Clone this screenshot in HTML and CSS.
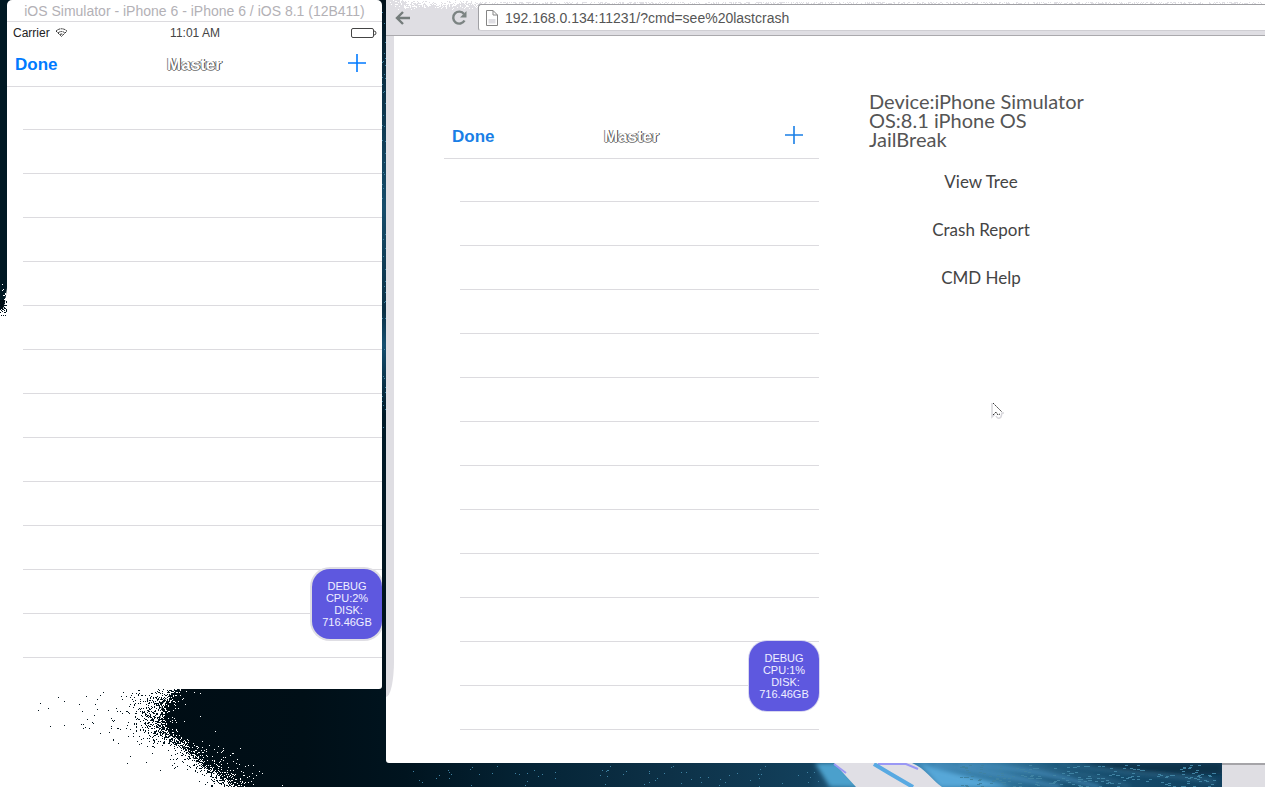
FILE: index.html
```html
<!DOCTYPE html>
<html lang="en">
<head>
<meta charset="utf-8">
<title>iOS Simulator remote debug</title>
<link rel="stylesheet" href="styles.css">
</head>
<body>
<svg class="wallpaper" viewBox="0 0 1265 787" preserveAspectRatio="xMinYMin slice" aria-hidden="true">
  <defs>
    <linearGradient id="floor" x1="0" x2="1">
      <stop offset="0" stop-color="#000b12"/><stop offset=".24" stop-color="#000f17"/><stop offset=".32" stop-color="#00141f"/>
      <stop offset=".42" stop-color="#052436"/><stop offset=".53" stop-color="#0d3147"/><stop offset=".64" stop-color="#12405c"/>
      <stop offset=".7" stop-color="#418abb"/><stop offset=".79" stop-color="#3278a0"/><stop offset=".85" stop-color="#164f70"/><stop offset=".97" stop-color="#11405e"/>
    </linearGradient>
    <linearGradient id="seam" x1="0" y1="0" x2="0" y2="1">
      <stop offset="0" stop-color="#001019"/><stop offset=".12" stop-color="#0c3045"/><stop offset=".3" stop-color="#174d6b"/>
      <stop offset=".45" stop-color="#0c3045"/><stop offset=".5" stop-color="#164f70"/><stop offset=".6" stop-color="#001a28"/><stop offset="1" stop-color="#001019"/>
    </linearGradient>
    <filter id="soft"><feGaussianBlur stdDeviation="2"/></filter>
  </defs>
  <rect width="1265" height="787" fill="url(#floor)"/>
  <rect x="380" width="8" height="690" fill="url(#seam)"/>
  <rect width="10" height="300" fill="#001823"/>
  <path d="M0 309H3L5 302 7 288H10V689H180L168 697 162 704 160 722 164 733 178 740 188 752 198 764 214 773 230 787H0Z" fill="#fff"/>
  <g filter="url(#soft)">
    <path d="M815 763H838L860 787H830Z" fill="#4ba0cc"/>
    <path d="M920 763C945 773 975 777 1010 787H940Z" fill="#57a7d8"/>
    <path d="M935 765C990 771 1020 779 1060 787M960 764C1040 770 1060 777 1100 787" fill="none" stroke="#4a8fbe" stroke-width="3"/>
    <path d="M1010 764C1050 771 1090 772 1130 787M1060 764C1120 774 1160 772 1215 782" fill="none" stroke="#356e91" stroke-width="2"/>
    <path d="M1080 763H1222V774C1180 775 1130 774 1080 763Z" fill="#0c3048"/>
  </g>
  <path d="M834 763H912C926 769 932 780 942 787H856Z" fill="#e0dfe5"/>
  <path d="M834 764L846 773M878 764H906L918 769" fill="none" stroke="#9a98f5" stroke-width="2"/>
  <path d="M874 764L889 773 913 787" fill="none" stroke="#58a9e2" stroke-width="4"/>
  <path d="M1222 763H1265V787H1222Z" fill="#dfdee3"/>
  <path d="M1222 764H1265" stroke="#a5a4a8" stroke-width="2"/>
  <path id="dark-specks" fill="#00111a"/>
  <path id="white-specks" fill="#fff"/>
  <path id="stars" fill="#3f82a2"/>
</svg>

<main class="desktop">
  <section class="simulator" aria-label="iOS Simulator">
    <h1 class="sim-title">iOS Simulator - iPhone 6 - iPhone 6 / iOS 8.1 (12B411)</h1>
    <div class="status">
      <span class="carrier">Carrier
        <svg width="13" height="9" viewBox="0 0 13 9" fill="none" stroke="#333"><path stroke-dasharray="2 .6" d="M1 3Q6.500-1.500 12 3L6.500 8.500ZM3 5Q6.500 2 10 5M5 6.500Q6.500 5.500 8 6.500"/></svg>
      </span>
      <time class="clock">11:01 AM</time>
      <svg class="battery" width="26" height="10" viewBox="0 0 26 10" fill="none" stroke="#444"><rect x=".5" y=".5" width="22" height="9" rx="1.500"/><path d="M23 3Q25 3 25 5T23 7" /></svg>
    </div>
    <div class="nav">
      <button class="done">Done</button>
      <h2 class="nav-title">Master</h2>
      <button class="add" aria-label="Add"><svg width="18" height="18" viewBox="0 0 18 18"><path d="M9 0V18M0 9H18" stroke="#007aff" stroke-width="1.600"/></svg></button>
    </div>
    <ul class="rows"><li></li><li></li><li></li><li></li><li></li><li></li><li></li><li></li><li></li><li></li><li></li><li></li><li></li></ul>
    <div class="debug">DEBUG<br>CPU:2%<br>&nbsp;DISK:<br>716.46GB</div>
  </section>

  <section class="browser" aria-label="Browser">
    <header class="toolbar">
      <svg class="noise" width="879" height="12" aria-hidden="true"><path id="toolbar-specks" fill="#fff"/></svg>
      <button class="tool" aria-label="Back"><svg width="16" height="14" viewBox="0 0 16 14" fill="none" stroke="#747c7b" stroke-width="2.400"><path d="M15 7H2M8 1L2 7 8 13"/></svg></button>
      <button class="tool" aria-label="Reload"><svg width="16" height="16" viewBox="0 0 16 16"><path d="M13 4A6 6 0 1 0 13.500 10.500" fill="none" stroke="#7b8382" stroke-width="2.400"/><path d="M15.500 1V7.500H9Z" fill="#7b8382"/></svg></button>
      <label class="omnibox">
        <svg width="12" height="16" viewBox="0 0 12 16" fill="#fff" stroke="#858585"><path d="M.5.5H7L11.500 5V15.500H.5ZM7 .5V5H11.500"/><path d="M2.500 9H9.500V13.500H2.500Z" fill="#dfdee3" stroke="none"/></svg>
        <input class="url" aria-label="Address" value="192.168.0.134:11231/?cmd=see%20lastcrash">
      </label>
    </header>
    <div class="page">
      <div class="edge"></div>
      <div class="capture">
        <div class="nav">
          <button class="done">Done</button>
          <h2 class="nav-title">Master</h2>
          <button class="add" aria-label="Add"><svg width="18" height="18" viewBox="0 0 18 18"><path d="M9 0V18M0 9H18" stroke="#1a7fe6" stroke-width="1.600"/></svg></button>
        </div>
        <ul class="rows"><li></li><li></li><li></li><li></li><li></li><li></li><li></li><li></li><li></li><li></li><li></li><li></li><li></li></ul>
        <div class="debug">DEBUG<br>CPU:1%<br>&nbsp;DISK:<br>716.46GB</div>
      </div>
      <aside class="info">
        <p class="device">Device:iPhone Simulator<br>OS:8.1 iPhone OS<br>JailBreak</p>
        <nav class="links"><a href="#tree">View Tree</a><a href="#crash">Crash Report</a><a href="#help">CMD Help</a></nav>
      </aside>
    </div>
  </section>
</main>
<svg class="cursor" width="14" height="18" viewBox="0 0 14 18" fill="none" aria-hidden="true"><path d="M1 1V15L4 12M5 14Q7 18 10 15L11 11H13" stroke="#d8d7dc" stroke-width="1.500"/><path d="M2 1L11 10M2 13L5 10 7 13 9 12" stroke="#333" stroke-dasharray="2 1"/></svg>
<script src="specks.js"></script>
</body>
</html>
```
FILE: styles.css
```css
* { box-sizing: border-box; }
body { margin: 0; min-height: 100vh; overflow: hidden; font-family: "Liberation Sans", Arial, sans-serif; color: #222; background: #00121b; }
button { border: 0; padding: 0; background: none; font: inherit; }
h1, h2, p, ul { margin: 0; padding: 0; }
.wallpaper { position: absolute; inset: 0; width: 100%; height: 100%; }
.desktop { position: relative; display: grid; grid-template-columns: 375px 1fr; gap: 4px; align-items: start; padding-left: 7px; }

.simulator { position: relative; overflow: hidden; background: #fff; border-radius: 5px 5px 3px 3px; padding-bottom: 31px; }
.sim-title { height: 22px; border-bottom: 1px solid #dcdbdf; font-size: 14px; line-height: 23px; font-weight: 400; text-align: center; color: #b3b1b6; white-space: nowrap; }
.status { display: grid; grid-template-columns: 1fr auto 1fr; align-items: center; height: 21px; padding: 0 5px 0 6px; font-size: 12px; }
.carrier { display: flex; align-items: center; gap: 5px; }
.clock { color: #444; }
.battery { justify-self: end; }
.nav { display: grid; grid-template-columns: 1fr auto 1fr; align-items: center; height: 44px; padding: 0 8px; border-bottom: 1px solid #dcdbdf; }
.done { justify-self: start; font-size: 17px; line-height: 20px; font-weight: 700; color: #007aff; }
.nav-title { font-size: 17px; line-height: 20px; font-weight: 700; color: #fff; text-shadow: 1px 0 #444, -1px 0 #888, 0 1px #888; }
.add { justify-self: end; display: flex; margin-right: 8px; padding-bottom: 3px; }
.rows { list-style: none; padding-left: 16px; }
.rows li { height: 44px; border-bottom: 1px solid #dcdbdf; }
.rows li:first-child { height: 43px; }
.debug { position: absolute; right: 0; bottom: 50px; width: 70px; height: 70px; padding-top: 11px; border-radius: 18px; background: #5e58df; box-shadow: 0 0 0 2px #dfdee4; color: #f0efff; font-size: 11px; line-height: 12px; text-align: center; }

.browser { background: #fff; border-radius: 0 0 0 3px; }
.toolbar { position: relative; display: flex; align-items: center; height: 36px; padding: 4px 0 4px 9px; background: #dfdee3; border-bottom: 1px solid #aaa9ad; }
.noise { position: absolute; top: 0; left: 0; width: 100%; }
.tool { position: relative; display: flex; width: 56px; }
.tool + .tool { width: 27px; }
.omnibox { position: relative; flex: 1; display: flex; align-items: center; gap: 7px; height: 27px; padding-left: 7px; background: #fff; border: 1px solid #a0a0a4; border-right: 0; border-bottom-color: #cfced3; border-radius: 3px 0 0 3px; }
.url { flex: 1; min-width: 0; border: 0; padding: 0; background: none; font: 14px "Liberation Sans", Arial, sans-serif; color: #555; outline: 0; }
.page { display: grid; grid-template-columns: 8px 375px 1fr; }
.edge { height: 661px; background: #dfdee3; border-bottom-right-radius: 8px 36px; }
.capture { position: relative; margin-left: 50px; margin-right: -50px; padding: 79px 0 33px; }
.capture .debug { bottom: 52px; box-shadow: 0 0 0 1px #d8d7ef; }
.capture .done { color: #1a7fe6; }
.info { display: flex; flex-direction: column; align-items: flex-start; padding: 56px 0 0 100px; font-family: Lato, sans-serif; color: #555; }
.device { font-size: 20px; line-height: 19px; white-space: nowrap; }
.links { display: flex; flex-direction: column; align-items: center; width: 224px; padding-top: 21px; gap: 24px; }
.links a { font-size: 17px; line-height: 24px; color: #444; text-decoration: none; }
.cursor { position: absolute; left: 991px; top: 402px; }
```
FILE: specks.js
```javascript
let seed = 7;
const rand = () => (seed = (seed * 16807) % 2147483647) / 2147483647;
const dot = (x, y, w = 1) => `M${x} ${y}h${w}v1h${-w}z`;
const draw = (id, d) => document.getElementById(id).setAttribute('d', d);

const edge = [[689, 180], [697, 168], [704, 162], [722, 160], [733, 164], [740, 178], [752, 188], [764, 198], [773, 214], [787, 230]];
const edgeAt = (y) => {
  for (let i = 1; i < edge.length; i++) {
    const [y0, x0] = edge[i - 1], [y1, x1] = edge[i];
    if (y <= y1) return x0 + (x1 - x0) * (y - y0) / (y1 - y0);
  }
  return 230;
};
let dark = '', white = '', stars = '', bar = '';
for (let y = 689; y < 787; y++) {
  const e = Math.round(edgeAt(y));
  for (let d = 0; d < 150; d++) {
    const reach = y < 745 ? 14 : 6;
    if (rand() < 0.6 * Math.exp(-d / reach) + (d < 80 ? 0.004 : 0.0008)) dark += dot(e - d, y);
  }
  for (let d = 0; d < 60; d++) {
    if (rand() < 0.5 * Math.exp(-d / (y > 745 ? 12 : 5)) + 0.002) white += dot(e + d, y);
  }
}
for (let y = 260; y < 316; y++) {
  for (let x = 0; x < 7; x++) {
    const p = (y - 275) / 40;
    if (y < 300 ? rand() < p * x / 10 : false) white += dot(x, y);
    if (y > 300 && rand() < 0.3) dark += dot(x, y);
  }
}
for (let i = 0; i < 70; i++) stars += dot(400 + Math.floor(rand() * 420), 765 + Math.floor(rand() * 22));
for (let i = 0; i < 200; i++) stars += dot(960 + Math.floor(rand() * 255), 765 + Math.floor(rand() * 22), 3);
for (let i = 0; i < 50; i++) stars += dot(382 + Math.floor(rand() * 4), Math.floor(rand() * 430));
for (let y = 0; y < 12; y++) {
  for (let x = 4; x < 1600; x++) {
    const p = x < 92 ? (0.95 - y / 10) * Math.min(1, x / 30) : (y < 2 ? 1 : y < 4 ? 0.6 : 0);
    if (rand() < p) bar += dot(x, y);
  }
}
draw('dark-specks', dark);
draw('white-specks', white);
draw('stars', stars);
draw('toolbar-specks', bar);
```
